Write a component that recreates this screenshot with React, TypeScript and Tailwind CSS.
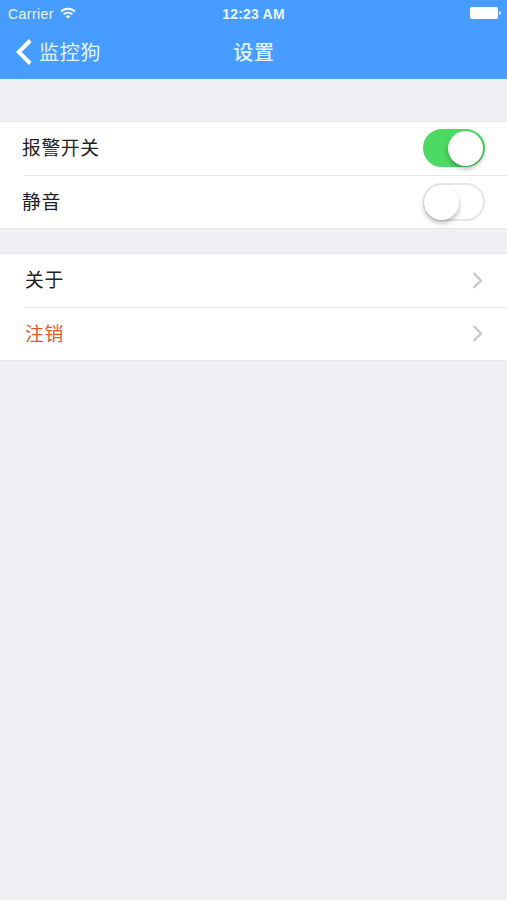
import React from 'react';

const StatusBar: React.FC = () => {
    return (
        <div className="flex h-[27px] items-center justify-between pl-2 pr-[6px] text-[14px] leading-none text-[#e8f6ff]">
            <div className="flex w-[120px] items-center gap-[6px] tracking-[0.45px]">
                <span>Carrier</span>
                <svg className="-mt-[2px]" width="16" height="12" viewBox="0 0 16 12" fill="none" stroke="#fff" strokeWidth="1.9">
                    <path d="M1 4.6a9.9 9.9 0 0 1 14 0" />
                    <path d="M3.7 7.4a6.1 6.1 0 0 1 8.6 0" />
                    <path d="M8 11.7 5.7 9.3a3.3 3.3 0 0 1 4.6 0z" fill="#fff" stroke="none" />
                </svg>
            </div>
            <span className="mr-[2px] text-[14px] font-bold tracking-[0.2px]">12:23 AM</span>
            <div className="-mt-px flex w-[120px] items-center justify-end">
                <div className="h-3 w-7 rounded-[2px] bg-white" />
                <div className="ml-px h-1 w-[2px] rounded-r-full bg-[#d5ebff]" />
            </div>
        </div>
    );
};

const NavBar: React.FC = () => {
    return (
        <div className="grid h-[52px] grid-cols-3 items-center text-[20px] leading-none tracking-[0.7px] text-[#e4f4ff]">
            <button className="-mt-[2px] flex items-center gap-[7px] pl-4">
                <svg width="16" height="26" viewBox="0 0 16 26" fill="none" stroke="#fff" strokeWidth="4">
                    <path d="M14.2 1.5 2.8 13l11.4 11.5" />
                </svg>
                <span className="pt-[2px]">监控狗</span>
            </button>
            <h1 className="pl-px text-center font-medium">设置</h1>
        </div>
    );
};

const Toggle: React.FC<{ on?: boolean }> = ({ on }) => {
    return (
        <button
            role="switch"
            aria-checked={!!on}
            className={`flex h-[38px] w-[62px] items-center rounded-full border-2 ${
                on ? '-mt-px justify-end border-[#4cd964] bg-[#4cd964]' : 'border-[#e5e5e5] bg-white'
            }`}
        >
            <span
                className={`size-[35px] shrink-0 rounded-full bg-white shadow-[0_3px_5px_rgba(0,0,0,0.28)] ${
                    on ? '' : '-ml-px'
                }`}
            />
        </button>
    );
};

const Chevron: React.FC = () => {
    return (
        <svg className="-mt-px" width="11" height="17" viewBox="0 0 11 17" fill="none" stroke="#c7c7cc" strokeWidth="2.3">
            <path d="M1.5 1 9 8.5 1.5 16" />
        </svg>
    );
};

const Divider: React.FC = () => <div className="ml-[25px] h-px bg-[#e6e6e8]" />;

const App: React.FC = () => {
    return (
        <div className="min-h-screen bg-[#efeff4] font-['Liberation_Sans','Noto_Sans_CJK_SC',sans-serif] text-[18.8px] leading-none tracking-[0.6px] text-[#222]">
            <header className="h-[79px] bg-[#479dff] tracking-normal">
                <StatusBar />
                <NavBar />
            </header>

            <section className="mt-[42px] border-y border-[#e6e6ea] bg-white">
                <div className="flex h-[53px] items-center justify-between pl-[22px] pr-[22px]">
                    <span className="pt-[2px]">报警开关</span>
                    <Toggle on />
                </div>
                <Divider />
                <div className="flex h-[52px] items-center justify-between pl-[22px] pr-[22px]">
                    <span className="pt-[2px]">静音</span>
                    <Toggle />
                </div>
            </section>

            <section className="mt-6 border-y border-[#e6e6ea] bg-white">
                <div className="flex h-[53px] items-center justify-between pl-[25px] pr-6">
                    <span className="pt-[2px]">关于</span>
                    <Chevron />
                </div>
                <Divider />
                <div className="flex h-[52px] items-center justify-between pl-[25px] pr-6 text-[#e2592b]">
                    <span className="pt-[2px]">注销</span>
                    <Chevron />
                </div>
            </section>
        </div>
    );
};

export default App;
